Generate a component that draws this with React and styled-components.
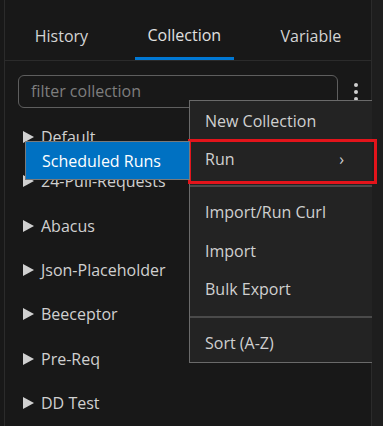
import React from "react";
import styled, { createGlobalStyle } from "styled-components";

const Global = createGlobalStyle`
  html, body { margin: 0; padding: 0; background: #181818; }
  body { font-family: "Open Sans", "Liberation Sans", Arial, sans-serif; }
  #root { width: 383px; height: 426px; overflow: hidden; }
`;

const Frame = styled.div`
  display: flex;
  width: 383px;
  height: 426px;
  background: #181818;
  padding-left: 4px;
  box-sizing: border-box;
`;

const Panel = styled.div`
  position: relative;
  flex: 0 0 368px;
  border-left: 1px solid #2b2b2b;
  border-right: 1px solid #2b2b2b;
  box-sizing: border-box;
  display: flex;
  flex-direction: column;
`;

const Gutter = styled.div`
  flex: 1;
  background: #1e1e1e;
`;

const Tabs = styled.div`
  display: flex;
  justify-content: space-around;
  height: 60px;
  align-items: flex-end;
  border-bottom: 1px solid #2b2b2b;
`;

const Tab = styled.div`
  padding: ${(p) => (p.$active ? "2px 13px 0" : "4px 13px 0")};
  height: 49px;
  box-sizing: border-box;
  display: flex;
  align-items: center;
  font-size: 16px;
  line-height: 20px;
  color: ${(p) => (p.$active ? "#e0e0e0" : "#d4d4d4")};
  border-bottom: 3px solid ${(p) => (p.$active ? "#0078d4" : "transparent")};
`;

const FilterRow = styled.div`
  display: flex;
  align-items: center;
  padding: 14px 0 0 13px;
`;

const Filter = styled.div`
  width: 320px;
  height: 33px;
  box-sizing: border-box;
  border: 1px solid #5e5e5e;
  border-radius: 6px;
  display: flex;
  align-items: center;
  padding: 0 0 2px 12px;
  font-size: 16px;
  line-height: 20px;
  color: #7e7e7e;
`;

const Kebab = styled.div`
  flex: 1;
  display: flex;
  flex-direction: column;
  align-items: center;
  gap: 3px;
  padding-left: 2px;
`;

const Dot = styled.span`
  width: 4px;
  height: 4px;
  border-radius: 50%;
  background: #cfcfcf;
`;

const List = styled.div`
  display: flex;
  flex-direction: column;
  padding: 7px 0 0 18px;
`;

const Item = styled.div`
  height: 44.3px;
  display: flex;
  align-items: center;
  gap: 7px;
  font-size: 16px;
  line-height: 20px;
  color: #d0d0d0;
`;

const Caret = styled.span`
  width: 0;
  height: 0;
  border-top: 6px solid transparent;
  border-bottom: 6px solid transparent;
  border-left: 11px solid #d0d0d0;
`;

const Menu = styled.div`
  position: absolute;
  left: 184px;
  top: 100px;
  width: 183px;
  background: #232323;
  border: 1px solid #6a6a6a;
  border-right: none;
  box-sizing: border-box;
  padding: 1px 0 0;
  display: flex;
  flex-direction: column;
`;

const MenuItem = styled.div`
  position: relative;
  height: ${(p) => p.$h || "38px"};
  display: flex;
  align-items: center;
  justify-content: space-between;
  padding: 0 28px 0 15px;
  font-size: 16px;
  line-height: 20px;
  color: #d0d0d0;
`;

const Sep = styled.div`
  height: 2px;
  background: #4a4a4a;
  margin: ${(p) => p.$m || "7px 0"};
`;

const Highlight = styled.div`
  position: absolute;
  left: -2px;
  right: -5px;
  top: -1px;
  bottom: -6px;
  border: 3px solid #e3141b;
  pointer-events: none;
`;

const Chevron = styled.span`
  font-size: 16px;
  color: #cfcfcf;
`;

const Submenu = styled.div`
  position: absolute;
  left: 20px;
  top: 141px;
  width: 165px;
  height: 39px;
  box-sizing: border-box;
  background: #0071c2;
  border: 1px solid #7a7a7a;
  display: flex;
  align-items: center;
  padding-left: 16px;
  font-size: 16px;
  line-height: 20px;
  color: #ffffff;
`;

const items = [
  "Default",
  "24-Pull-Requests",
  "Abacus",
  "Json-Placeholder",
  "Beeceptor",
  "Pre-Req",
  "DD Test",
];

export default function App() {
  return (
    <>
      <Global />
      <Frame>
        <Panel>
          <Tabs>
            <Tab>History</Tab>
            <Tab $active>Collection</Tab>
            <Tab>Variable</Tab>
          </Tabs>
          <FilterRow>
            <Filter>filter collection</Filter>
            <Kebab>
              <Dot />
              <Dot />
              <Dot />
            </Kebab>
          </FilterRow>
          <List>
            {items.map((t) => (
              <Item key={t}>
                <Caret />
                {t}
              </Item>
            ))}
          </List>
          <Menu>
            <MenuItem>New Collection</MenuItem>
            <MenuItem>
              Run
              <Chevron>›</Chevron>
              <Highlight />
            </MenuItem>
            <Sep $m="7px 0 6px" />
            <MenuItem>Import/Run Curl</MenuItem>
            <MenuItem $h="39px">Import</MenuItem>
            <MenuItem>Bulk Export</MenuItem>
            <Sep $m="8px 0 6px" />
            <MenuItem>Sort (A-Z)</MenuItem>
          </Menu>
          <Submenu>Scheduled Runs</Submenu>
        </Panel>
        <Gutter />
      </Frame>
    </>
  );
}
